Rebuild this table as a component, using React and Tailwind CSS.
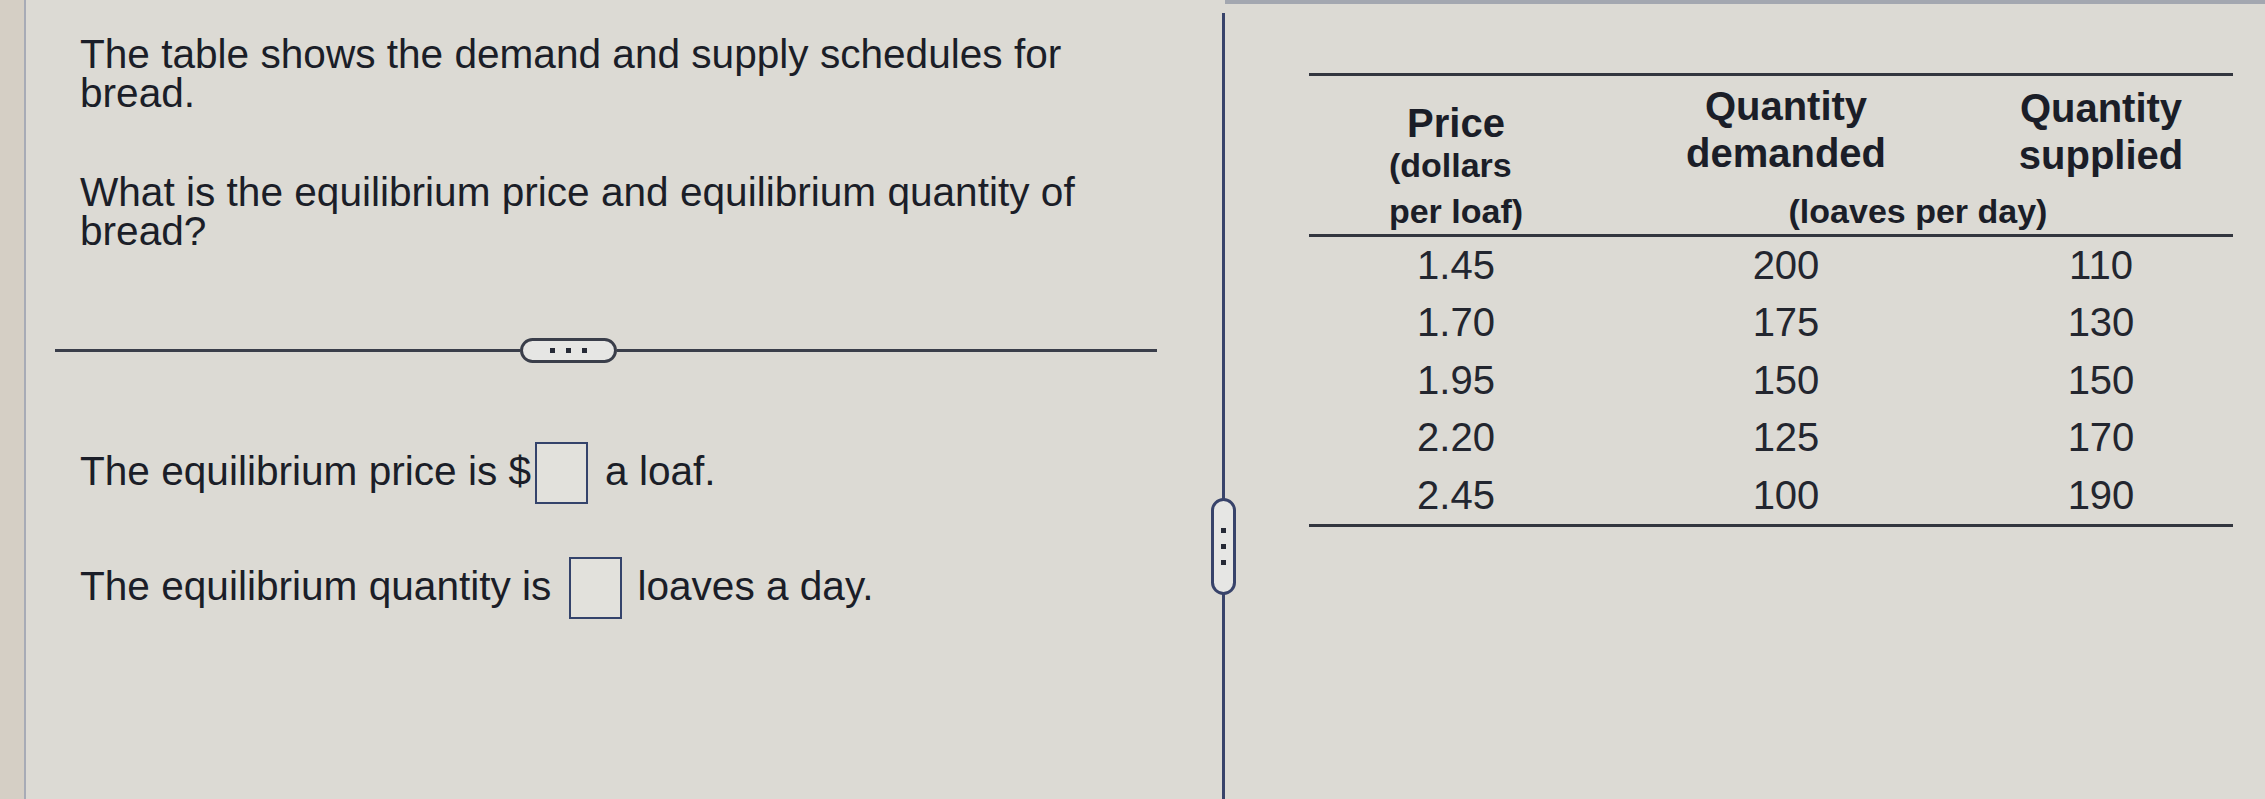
const rows = [
  ["1.45", "200", "110"],
  ["1.70", "175", "130"],
  ["1.95", "150", "150"],
  ["2.20", "125", "170"],
  ["2.45", "100", "190"],
];

function Dot() {
  return <div className="h-[5px] w-[5px] bg-[#262a36]" />;
}

function AnswerBox() {
  return <div className="h-[62px] w-[53px] shrink-0 border-2 border-[#34436b] bg-[#e2e1dc]" />;
}

export default function App() {
  return (
    <div className="flex h-[799px] w-[2265px] overflow-hidden bg-[#dcdad4] font-['Liberation_Sans',Arial,sans-serif] text-[#1b1e28]">
      {/* left edge strip */}
      <div className="w-[26px] shrink-0 border-r-2 border-[#a7abb6] bg-[#d5cfc5]" />

      {/* left panel */}
      <div className="w-[1196px] shrink-0 pl-[54px] pt-[35px]">
        <p className="w-[1040px] text-[40.6px] leading-[39px]">
          The table shows the demand and supply schedules for bread.
        </p>
        <p className="mt-[60px] w-[1040px] text-[40.6px] leading-[39px]">
          What is the equilibrium price and equilibrium quantity of bread?
        </p>

        <div className="-ml-[25px] mt-[87px] flex w-[1102px] items-center">
          <div className="h-[3px] w-[465px] bg-[#3a3e4a]" />
          <div className="flex h-[25px] w-[97px] items-center justify-center gap-[11px] rounded-full border-[3px] border-[#3a3e4a] bg-[#e6e6e4]">
            <Dot />
            <Dot />
            <Dot />
          </div>
          <div className="h-[3px] flex-1 bg-[#3a3e4a]" />
        </div>

        <div className="mt-[79px] flex items-center text-[40.6px] leading-[40px]">
          <span className="pb-[4px]">The equilibrium price is $</span>
          <div className="ml-[4px]">
            <AnswerBox />
          </div>
          <span className="ml-[17px] pb-[4px]">a loaf.</span>
        </div>

        <div className="mt-[53px] flex items-center text-[40.6px] leading-[40px]">
          <span className="pb-[4px]">The equilibrium quantity is</span>
          <div className="ml-[18px]">
            <AnswerBox />
          </div>
          <span className="ml-[15px] pb-[4px]">loaves a day.</span>
        </div>
      </div>

      {/* vertical divider with handle */}
      <div className="relative flex w-[3px] shrink-0 flex-col pt-[13px]">
        <div className="flex-1 bg-[#38436a]" />
        <div className="absolute left-[-11px] top-[498px] flex h-[97px] w-[25px] flex-col items-center justify-center gap-[11px] rounded-full border-[3px] border-[#38436a] bg-[#e6e6e4]">
          <Dot />
          <Dot />
          <Dot />
        </div>
      </div>

      {/* right panel */}
      <div className="flex-1 border-t-4 border-[#a3a7b0] pl-[84px] pt-[69px]">
        <div className="w-[924px]">
          <div className="grid grid-cols-[294px_366px_264px] grid-rows-[112px_46px] border-y-[3px] border-[#33363f] font-bold">
            <div className="row-span-2 flex justify-center">
              <div className="flex flex-col items-start justify-end">
                <div className="self-center text-[40px] leading-[37px]">Price</div>
                <div className="text-[34px] leading-[46px]">(dollars</div>
                <div className="text-[34px] leading-[46px]">per loaf)</div>
              </div>
            </div>
            <div className="pt-[7px] text-center text-[40px] leading-[47px]">
              Quantity
              <br />
              demanded
            </div>
            <div className="pt-[9px] text-center text-[40px] leading-[47px]">
              Quantity
              <br />
              supplied
            </div>
            <div className="col-span-2 text-center text-[34px] leading-[46px]">(loaves per day)</div>
          </div>

          <div className="border-b-[3px] border-[#33363f]">
            {rows.map((r) => (
              <div key={r[0]} className="grid h-[57.4px] grid-cols-[294px_366px_264px] text-center text-[40px] leading-[57.4px] text-[#23262f]">
                <div>{r[0]}</div>
                <div>{r[1]}</div>
                <div>{r[2]}</div>
              </div>
            ))}
          </div>
        </div>
      </div>
    </div>
  );
}
